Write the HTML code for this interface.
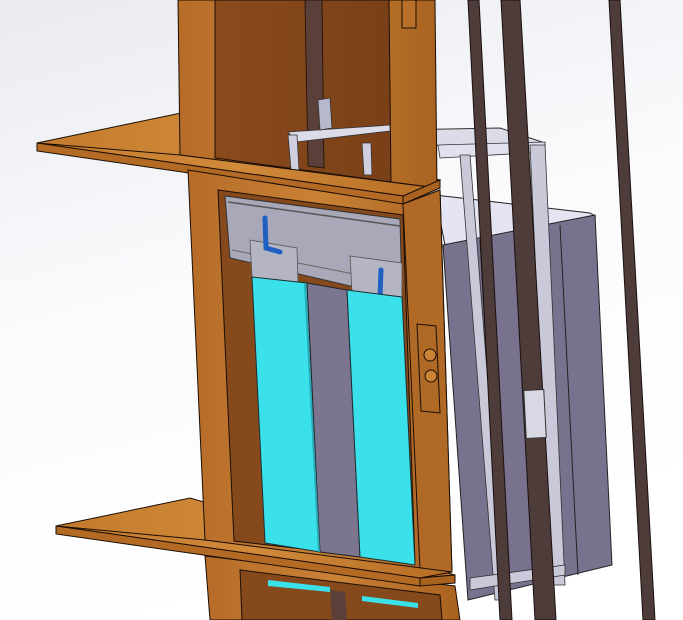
<!DOCTYPE html>
<html><head><meta charset="utf-8"><style>
html,body{margin:0;padding:0;width:683px;height:620px;overflow:hidden;background:#fff}
svg{display:block}
</style></head><body>
<svg width="683" height="620" viewBox="0 0 683 620" xmlns="http://www.w3.org/2000/svg">
<defs>
<linearGradient id="bg" x1="0" y1="0" x2="0.3" y2="1"><stop offset="0" stop-color="#e9ebf1"/><stop offset="0.5" stop-color="#fbfbfd"/><stop offset="1" stop-color="#ffffff"/></linearGradient>
<linearGradient id="wood" x1="0" y1="0" x2="1" y2="0"><stop offset="0" stop-color="#b66c28"/><stop offset="0.5" stop-color="#c98236"/><stop offset="1" stop-color="#a9621f"/></linearGradient>
<linearGradient id="woodd" x1="0" y1="0" x2="1" y2="0"><stop offset="0" stop-color="#8a4a1c"/><stop offset="1" stop-color="#7a4018"/></linearGradient>
<linearGradient id="slab" x1="0" y1="0" x2="1" y2="0"><stop offset="0" stop-color="#c47a2c"/><stop offset="0.5" stop-color="#d08a3a"/><stop offset="1" stop-color="#b76d25"/></linearGradient>
</defs>
<rect width="683" height="620" fill="url(#bg)"/>

<polygon points="609,0 620,0 655,620 643,620" fill="#4e3c3a" stroke="#1a1010" stroke-width="1"/>

<!-- car top -->
<polygon points="435,195 590,213 595,216 445,245" fill="#e4e4f2" stroke="#222" stroke-width="1"/>
<polygon points="443,245 595,215 612,565 468,600" fill="#79728f" stroke="#222" stroke-width="1"/>
<line x1="480" y1="240" x2="500" y2="595" stroke="#222"/>
<line x1="560" y1="225" x2="578" y2="575" stroke="#222"/>

<!-- car frame -->
<polygon points="288,132 500,128 545,143 545,150 300,140" fill="#dcdce8" stroke="#333" stroke-width="1"/>
<polygon points="288,135 297,135 299,172 291,172" fill="#cfcfdf" stroke="#333" stroke-width="0.8"/>
<polygon points="362,140 371,140 372,172 364,172" fill="#cfcfdf" stroke="#333" stroke-width="0.8"/>
<polygon points="438,145 545,142 545,152 440,158" fill="#e0e0ee" stroke="#333" stroke-width="0.8"/>
<polygon points="460,155 470,155 505,600 495,600" fill="#c9c9d9" stroke="#333" stroke-width="0.8"/>
<polygon points="530,145 545,145 565,585 550,585" fill="#c9c9d9" stroke="#333" stroke-width="0.8"/>
<polygon points="470,578 565,565 565,575 470,590" fill="#c9c9d9" stroke="#333" stroke-width="0.8"/>
<polygon points="318,100 330,98 332,130 320,132" fill="#b8b8cc" stroke="#333" stroke-width="0.8"/>

<polygon points="468,0 479,0 512,620 500,620" fill="#4e3c3a" stroke="#1a1010" stroke-width="1"/>
<polygon points="501,0 520,0 556,620 535,620" fill="#4e3c3a" stroke="#1a1010" stroke-width="1"/>
<rect x="525" y="390" width="20" height="48" fill="#d8d8e4" stroke="#333" transform="rotate(-3 535 414)"/>

<!-- upper slab (behind frame) -->
<polygon points="37,143 181,113 440,180 403,196" fill="url(#slab)" stroke="#1a0e05" stroke-width="1"/>

<!-- upper frame -->
<polygon points="178,0 435,0 437,188 180,155" fill="url(#wood)" stroke="#1a0e05" stroke-width="1"/>
<polygon points="215,0 389,0 391,182 215,158" fill="url(#woodd)" stroke="#1a0e05" stroke-width="1"/>
<polygon points="305,0 322,0 324,168 308,166" fill="#5a4038" stroke="#1a0e05" stroke-width="0.8"/>
<rect x="402" y="0" width="14" height="28" fill="#b8702a" stroke="#1a0e05"/>
<polygon points="288,132 390,125 390,131 296,142" fill="#dcdce8" stroke="#333" stroke-width="0.8"/>
<polygon points="288,135 297,135 299,170 291,170" fill="#cfcfdf" stroke="#333" stroke-width="0.8"/>
<polygon points="362,143 371,143 372,175 364,175" fill="#cfcfdf" stroke="#333" stroke-width="0.8"/>
<polygon points="318,100 330,98 332,128 320,130" fill="#b8b8cc" stroke="#333" stroke-width="0.8"/>
<!-- slab band in front of frame bottom -->
<polygon points="37,143 180,155 437,188 403,196" fill="url(#slab)" stroke="#1a0e05" stroke-width="1"/>
<polygon points="37,143 403,196 403,204 37,151" fill="#b26a24" stroke="#1a0e05" stroke-width="1"/>
<polygon points="403,196 440,180 440,188 403,204" fill="#a9621f" stroke="#1a0e05" stroke-width="1"/>

<!-- lower area (below lower slab) -->
<polygon points="205,556 455,586 460,620 210,620" fill="url(#wood)" stroke="#1a0e05" stroke-width="1"/>
<polygon points="240,570 440,595 442,620 242,620" fill="#86491b" stroke="#1a0e05"/>
<polygon points="268,580 330,587 330,592 268,586" fill="#3be1ea"/>
<polygon points="362,596 418,603 418,608 362,601" fill="#3be1ea"/>
<polygon points="330,590 345,592 347,620 332,620" fill="#5a4038"/>

<!-- lower slab -->
<polygon points="56,526 190,498 455,575 420,578" fill="url(#slab)" stroke="#1a0e05" stroke-width="1"/>

<!-- lower frame -->
<polygon points="188,170 403,204 440,190 452,572 420,570 205,540" fill="url(#wood)" stroke="#1a0e05" stroke-width="1"/>
<polygon points="403,204 440,190 452,572 420,570" fill="#b06a25" stroke="#1a0e05" stroke-width="1"/>
<polygon points="218,190 403,215 415,562 234,541" fill="#86491b" stroke="#1a0e05" stroke-width="1"/>
<polygon points="225,196 400,219 402,298 230,258" fill="#a8a8b8" stroke="#333" stroke-width="1"/>
<line x1="228" y1="202" x2="400" y2="226" stroke="#555" stroke-width="1.5"/>
<line x1="232" y1="250" x2="400" y2="283" stroke="#666" stroke-width="1"/>
<polygon points="250,240 297,248 298,283 252,277" fill="#b4b4c2" stroke="#555" stroke-width="0.8"/>
<polygon points="350,256 402,263 402,297 352,292" fill="#b4b4c2" stroke="#555" stroke-width="0.8"/>
<path d="M265,218 L266,248 L280,252" fill="none" stroke="#1f5fc0" stroke-width="5" stroke-linecap="round"/>
<path d="M381,270 L380,297 L372,296" fill="none" stroke="#1f5fc0" stroke-width="5" stroke-linecap="round"/>
<polygon points="252,277 307,283 320,552 265,543" fill="#3be1ea" stroke="#1a3035" stroke-width="1"/>
<polygon points="307,283 347,290 360,557 320,552" fill="#7b7590" stroke="#222" stroke-width="1"/>
<polygon points="347,290 402,297 415,565 360,557" fill="#3be1ea" stroke="#1a3035" stroke-width="1"/>
<line x1="305" y1="283" x2="319" y2="552" stroke="#2aa9b8" stroke-width="2"/>
<polygon points="417,324 436,326 440,413 421,411" fill="#b06a25" stroke="#1a0e05" stroke-width="1"/>
<circle cx="430" cy="355" r="6" fill="#c98236" stroke="#1a0e05"/>
<circle cx="431" cy="376" r="6" fill="#c98236" stroke="#1a0e05"/>

<!-- lower slab front band -->
<polygon points="56,526 205,540 452,572 420,578" fill="url(#slab)" stroke="#1a0e05" stroke-width="1"/>
<polygon points="56,526 420,578 420,586 56,534" fill="#b26a24" stroke="#1a0e05" stroke-width="1"/>
<polygon points="420,578 455,575 455,583 420,586" fill="#a9621f" stroke="#1a0e05" stroke-width="1"/>
</svg>
</body></html>
